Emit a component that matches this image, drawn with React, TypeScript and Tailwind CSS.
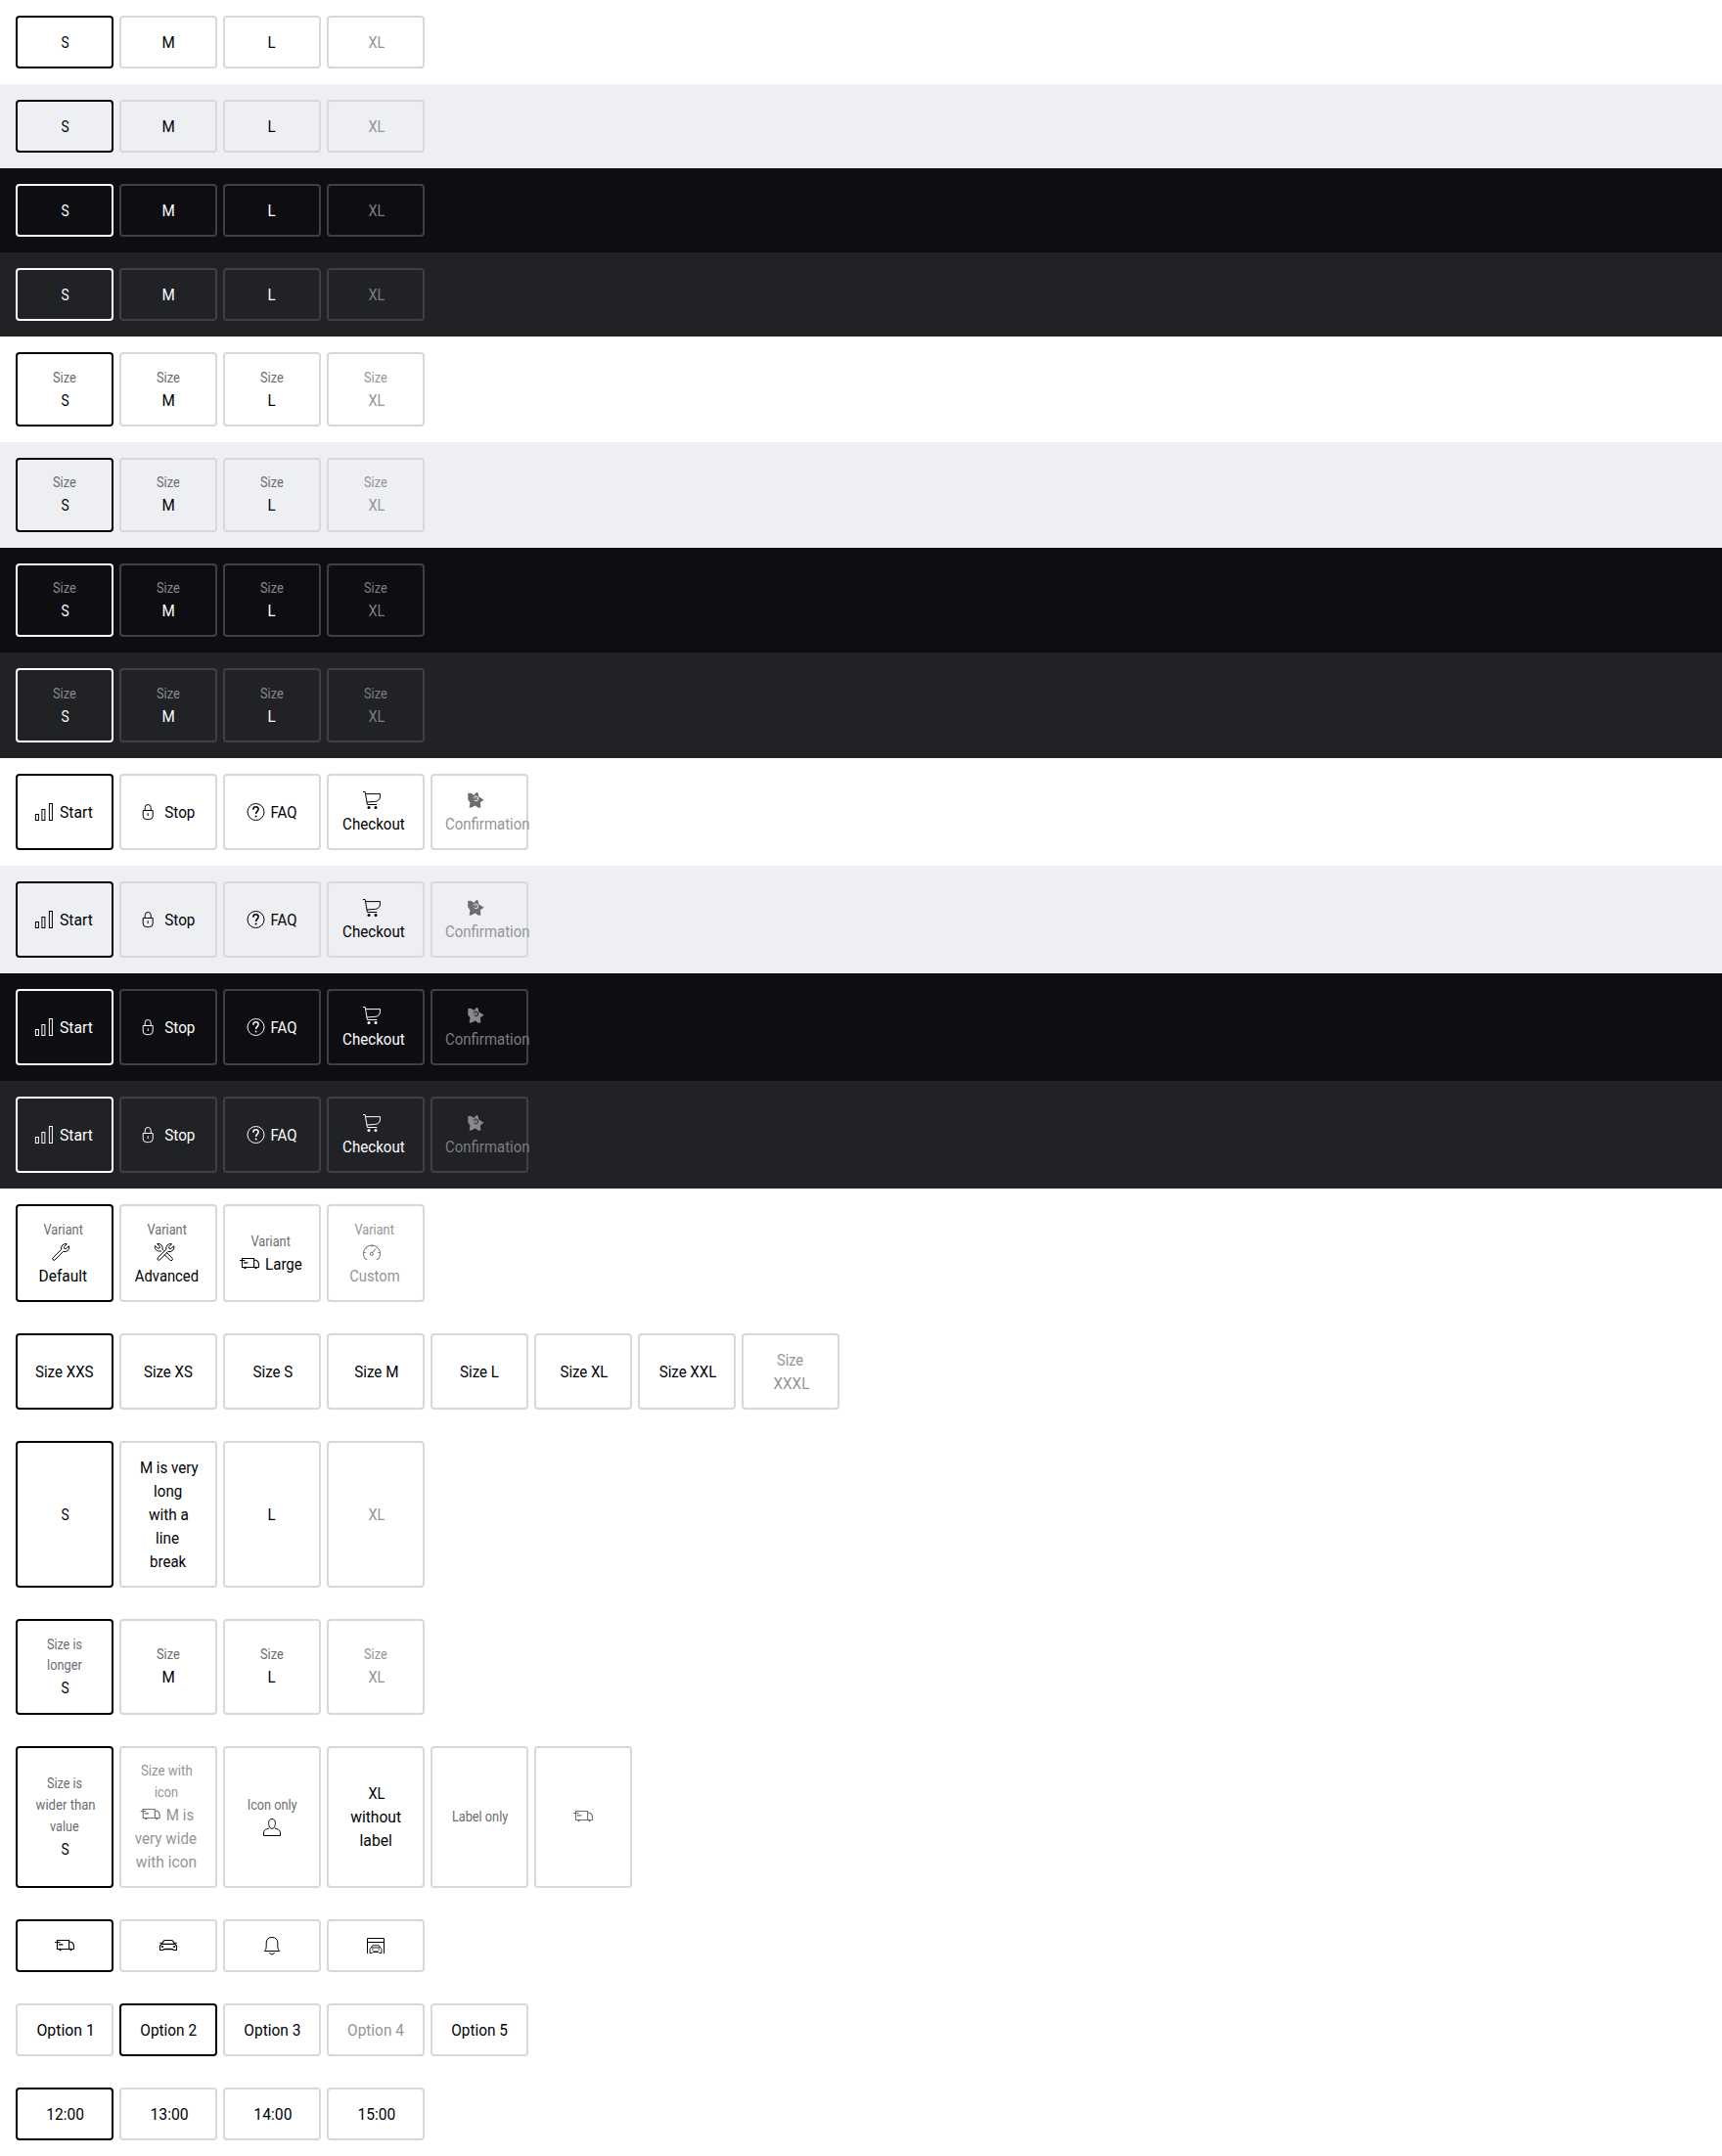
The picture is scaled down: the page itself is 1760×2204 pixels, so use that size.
import React from "react";

type IconName =
  | "chart" | "lock" | "question" | "cart" | "star" | "wrench" | "tools"
  | "gauge" | "van" | "car" | "bell" | "garage" | "user";

const WRENCH =
  "M18.4 3.7l-2.9 2.9.3 1.7 1.7.4 3-3a4.6 4.6 0 0 1-5.9 5.7L6.1 20a1.5 1.5 0 0 1-2.1-2.1l8.7-8.6a4.6 4.6 0 0 1 5.7-5.6z";

const icons: Record<IconName, React.ReactNode> = {
  chart: (
    <>
      <rect x="3.5" y="14.5" width="3" height="6" />
      <rect x="10" y="9.5" width="3" height="11" />
      <rect x="17.5" y="3.5" width="3" height="17" />
    </>
  ),
  lock: (
    <>
      <path d="M7 10.500h10v5.500a3.600 3.600 0 0 1-3.600 3.600h-2.800A3.600 3.600 0 0 1 7 16z" />
      <path d="M9 10.500V7.500a3 3 0 0 1 6 0v3M12 13.200v2.800" />
    </>
  ),
  question: (
    <>
      <circle cx="12" cy="12" r="8.5" />
      <path d="M9.400 9.700v-.4a2.600 2.500 0 0 1 5.200 0c0 2-2.500 2.200-2.500 4.600" strokeWidth="1.5" />
      <circle cx="12.1" cy="16.6" r="1" fill="currentColor" stroke="none" />
    </>
  ),
  cart: (
    <>
      <path d="M3 3.500h2.200l2.200 13h9.800M5.600 5.600h14.900v2.200c0 3.400-1.800 5.300-5.200 5.600l-8.400.6" />
      <circle cx="9" cy="19.5" r="1.5" fill="currentColor" stroke="none" />
      <circle cx="16" cy="19.5" r="1.5" fill="currentColor" stroke="none" />
    </>
  ),
  star: (
    <>
      <path
        d="M12.700 4.200c1.600-.7 2.300.6 2.500 4.100l5.400 3.400-3.700 2.500.5 5.300-2.600.3-2.900-2.200-4.800 2.200-1.500-.6.900-4.700-2.300-3.200.1-6.300 2.700-.2 3.400 2z"
        fill="currentColor"
        stroke="none"
      />
      <path d="M9.800 9.600l1.600-1.700 2.300.4 1.100 1.700-.6 2.200-2 .6-1.700-1.100M12 9.300l1 1.300" className="stroke-[var(--tile-bg)]" strokeWidth=".9" />
    </>
  ),
  wrench: <path d={WRENCH} />,
  tools: (
    <>
      <path d={WRENCH} transform="translate(1.2 0)" />
      <path d="M9 11.200L7.900 10.900A4.600 4.600 0 0 1 2.400 5.300l2.900 2.900 1.700-.3.4-1.700-2.800-2.700a4.600 4.600 0 0 1 5.400 5.700l1.400 1.400M14.200 12.400l5.900 5.900a1.500 1.500 0 0 1-2.100 2.100l-6-6" />
    </>
  ),
  gauge: (
    <>
      <path d="M7.200 19.200l-1.600.2A8.600 8.600 0 1 1 18.400 19.400l-1.600-.2M3.600 12.500h2M5.800 7.200l1.400 1.200M12 4.500v2M17.800 7.200l-1 .9M20.400 12.500h-2" />
      <circle cx="11.8" cy="13.8" r="1.6" />
      <path d="M12.900 12.500l3-3.900" />
    </>
  ),
  van: (
    <>
      <path d="M2 8.500h5.400M6 10.900h4.300M4.500 8.500v-2h12.100v9.300M4.500 8.500v7h14.800l2.200-.2v-2.600c0-2-1.300-3.900-2.900-4.400h-2" strokeWidth="1.1" />
      <circle cx="7.500" cy="16" r="1.2" fill="currentColor" stroke="none" />
      <circle cx="18.500" cy="16" r="1.2" fill="currentColor" stroke="none" />
    </>
  ),
  car: (
    <>
      <path d="M3.200 9.200h2.300M18.500 9.200h2.300M5.300 10.300l1.900-2.900c.4-.6 1-.9 1.700-.9h6.200c.7 0 1.300.3 1.700.9l1.900 2.900M5.300 10.400h13.400l1.800 1.600v4.500h-3l-1-1h-9l-1 1h-3V12z" strokeWidth="1.1" />
      <path d="M8.500 15h7l1 1h-9zM5 12.500h2v1H5zM17 12.500h2v1h-2z" fill="currentColor" strokeWidth=".5" />
    </>
  ),
  bell: (
    <path d="M4.300 17.500h15.400c-1.300-1.200-1.900-2.700-1.900-5V9c0-3.300-2.200-5.500-5.800-5.500S6.200 5.700 6.200 9v3.500c0 2.300-.6 3.800-1.900 5zM9.600 19c.2 1.200 1 1.800 2.400 1.800s2.200-.6 2.400-1.800" />
  ),
  garage: (
    <>
      <path d="M3.500 20V4.500h17V20M3.500 8.500h17" />
      <path d="M7.400 14l1.300-2.200h6.600l1.300 2.200 1.400 1.300v4.200h-2.300l-.9-1H9.200l-.9 1H6v-4.200zM7.400 14h9.200M8 16h1.500M14.500 16H16M9.500 18h5" strokeWidth=".9" />
    </>
  ),
  user: (
    <path d="M8.600 7.300c0-2.300 1.300-3.800 3.400-3.800s3.400 1.500 3.400 3.800c0 3.400-1.100 6-3.400 6s-3.400-2.600-3.400-6zM9.300 12.300c-.6.900-1.300 1.200-2.500 1.500-2.100.5-3.300 1.900-3.300 4.100v2.600h17v-2.600c0-2.200-1.200-3.600-3.300-4.100-1.200-.3-1.900-.6-2.500-1.500" />
  ),
};

function Icon({ name, className = "" }: { name: IconName; className?: string }) {
  return (
    <svg viewBox="0 0 24 24" fill="none" stroke="currentColor" strokeWidth="1" className={`size-6 shrink-0 ${className}`}>
      {icons[name]}
    </svg>
  );
}

const ctx = document.createElement("canvas").getContext("2d")!;

/* Sets a run of text so that its visible ink spans exactly `width` pixels. */
function Fit({ text, width, size }: { text: string; width: number; size: number }) {
  ctx.font = `400 ${size}px Roboto`;
  const m = ctx.measureText(text);
  const scale = width / (m.actualBoundingBoxRight + m.actualBoundingBoxLeft);
  return (
    <span className="inline-flex shrink-0 justify-start" style={{ width }}>
      <span
        className="inline-block shrink-0 origin-left whitespace-nowrap"
        style={{ transform: `translateX(${m.actualBoundingBoxLeft * scale}px) scaleX(${scale})` }}
      >
        {text}
      </span>
    </span>
  );
}

type Run = { t?: string; w?: number; dx?: number; icon?: IconName };
type Item = { label?: Run[]; value?: Run[]; selected?: boolean; disabled?: boolean; muted?: boolean };
type Theme = "white" | "surface" | "black" | "charcoal";

const themes: Record<Theme, { bg: string; text: string; label: string; off: string; line: string; active: string }> = {
  white: { bg: "bg-white [--tile-bg:#ffffff]", text: "text-[#010205]", label: "text-[#6b6d70]", off: "text-[#949598]", line: "border-[#d8d8db]", active: "border-[#010205]" },
  surface: { bg: "bg-[#eeeff2] [--tile-bg:#eeeff2]", text: "text-[#010205]", label: "text-[#6b6d70]", off: "text-[#949598]", line: "border-[#d8d8db]", active: "border-[#010205]" },
  black: { bg: "bg-[#0e0e12] [--tile-bg:#0e0e12]", text: "text-[#fbfcff]", label: "text-[#88898c]", off: "text-[#7c7d81]", line: "border-[#404044]", active: "border-[#fbfcff]" },
  charcoal: { bg: "bg-[#212225] [--tile-bg:#212225]", text: "text-[#fbfcff]", label: "text-[#88898c]", off: "text-[#7c7d81]", line: "border-[#404044]", active: "border-[#fbfcff]" },
};

function Tile({ item, theme }: { item: Item; theme: Theme }) {
  const c = themes[theme];
  const iconColor = item.disabled || item.muted ? c.label : c.text;
  return (
    <button
      type="button"
      disabled={item.disabled}
      className={`flex w-[100px] shrink-0 flex-col items-center justify-center rounded-[4px] border-2 py-[13px] ${item.selected ? c.active : c.line}`}
    >
      {item.label?.map((r, i) => (
        <span key={i} className={`flex h-[21.8px] items-center text-[14px] leading-[22.6px] ${item.disabled ? c.off : c.label}`} style={{ translate: `${r.dx ?? 0}px 0` }}>
          <Fit text={r.t!} width={r.w!} size={14} />
        </span>
      ))}
      {item.value?.map((r, i) => (
        <span key={i} className={`flex h-6 items-center gap-[4.3px] text-[16.5px] leading-6 ${item.disabled ? c.off : c.text}`} style={{ translate: `${r.dx ?? 0}px 0` }}>
          {r.icon && <Icon name={r.icon} className={iconColor} />}
          {r.t && (
            <span className="flex pt-[1.5px]">
              <Fit text={r.t} width={r.w!} size={16.5} />
            </span>
          )}
        </span>
      ))}
    </button>
  );
}

function Row({ items, theme = "white" }: { items: Item[]; theme?: Theme }) {
  return (
    <section className={`flex gap-1.5 p-4 ${themes[theme].bg}`}>
      {items.map((item, i) => (
        <Tile key={i} item={item} theme={theme} />
      ))}
    </section>
  );
}

const S: Run = { t: "S", w: 8.3, dx: 0.5 };
const M: Run = { t: "M", w: 12, dx: 0.5 };
const L: Run = { t: "L", w: 7.3, dx: 0.5 };
const XL: Run = { t: "XL", w: 17, dx: 0.5 };
const size: Run = { t: "Size", w: 23.3 };
const variant: Run = { t: "Variant", w: 40.7, dx: -1.5 };

const plain: Item[] = [
  { value: [S], selected: true },
  { value: [M] },
  { value: [L] },
  { value: [XL], disabled: true },
];
const labelled: Item[] = plain.map((p) => ({ ...p, label: [size] }));
const withIcons: Item[] = [
  { value: [{ icon: "chart", t: "Start", w: 33.5, dx: -2.1 }], selected: true },
  { value: [{ icon: "lock", t: "Stop", w: 31, dx: -2.8 }] },
  { value: [{ icon: "question", t: "FAQ", w: 25.7, dx: -1.5 }] },
  { value: [{ icon: "cart", dx: -4 }, { t: "Checkout", w: 63.2, dx: -1.9 }] },
  { value: [{ icon: "star", dx: -4 }, { t: "Confirmation", w: 85.5, dx: 8 }], disabled: true },
];
const variants: Item[] = [
  { label: [variant], value: [{ icon: "wrench", dx: -4 }, { t: "Default", w: 48.3, dx: -1.5 }], selected: true },
  { label: [variant], value: [{ icon: "tools", dx: -4 }, { t: "Advanced", w: 65, dx: -2.2 }] },
  { label: [variant], value: [{ icon: "van", t: "Large", w: 37, dx: -2 }] },
  { label: [variant], value: [{ icon: "gauge", dx: -4 }, { t: "Custom", w: 51, dx: -1.8 }], disabled: true },
];
const sizes: Item[] = [
  { value: [{ t: "Size XXS", w: 59.7 }], selected: true },
  { value: [{ t: "Size XS", w: 50 }] },
  { value: [{ t: "Size S", w: 41, dx: 0.5 }] },
  { value: [{ t: "Size M", w: 44.7, dx: 0.3 }] },
  { value: [{ t: "Size L", w: 40 }] },
  { value: [{ t: "Size XL", w: 49, dx: 0.5 }] },
  { value: [{ t: "Size XXL", w: 58.7, dx: 0.7 }] },
  { value: [{ t: "Size", w: 27.3 }, { t: "XXXL", w: 37, dx: 0.5 }], disabled: true },
];
const longValue: Item[] = [
  { value: [S], selected: true },
  {
    value: [
      { t: "M is very", w: 59, dx: 0.8 },
      { t: "long", w: 28 },
      { t: "with a", w: 41 },
      { t: "line", w: 23.3 },
      { t: "break", w: 36.7 },
    ],
  },
  { value: [L] },
  { value: [XL], disabled: true },
];
const longLabel: Item[] = [
  { label: [{ t: "Size is", w: 35.7 }, { t: "longer", w: 35 }], value: [S], selected: true },
  { label: [size], value: [M] },
  { label: [size], value: [L] },
  { label: [size], value: [XL], disabled: true },
];
const mixed: Item[] = [
  { label: [{ t: "Size is", w: 35.9 }, { t: "wider than", w: 60.2, dx: 0.6 }, { t: "value", w: 29.3 }], value: [S], selected: true },
  {
    label: [{ t: "Size with", w: 52, dx: -2 }, { t: "icon", w: 23.4, dx: -2 }],
    value: [{ icon: "van", t: "M is", w: 27, dx: -2.3 }, { t: "very wide", w: 63.4, dx: -2.2 }, { t: "with icon", w: 61.3, dx: -2.2 }],
    disabled: true,
  },
  { label: [{ t: "Icon only", w: 50.3, dx: 0.6 }], value: [{ icon: "user" }] },
  { value: [{ ...XL, dx: 0.4 }, { t: "without", w: 51.4, dx: 0.2 }, { t: "label", w: 31.4, dx: 0.5 }] },
  { label: [{ t: "Label only", w: 56.8, dx: 0.8 }] },
  { value: [{ icon: "van" }], muted: true },
];
const iconOnly: Item[] = [
  { value: [{ icon: "van" }], selected: true },
  { value: [{ icon: "car" }] },
  { value: [{ icon: "bell" }] },
  { value: [{ icon: "garage" }] },
];
const options: Item[] = [
  { value: [{ t: "Option 1", w: 56.4, dx: -0.6 }] },
  { value: [{ t: "Option 2", w: 57.5, dx: 0.3 }], selected: true },
  { value: [{ t: "Option 3", w: 57.8, dx: 0.3 }] },
  { value: [{ t: "Option 4", w: 57.5, dx: 0.1 }], disabled: true },
  { value: [{ t: "Option 5", w: 57.5, dx: 0.2 }] },
];
const times: Item[] = [
  { value: [{ t: "12:00", w: 37.5, dx: 1.3 }], selected: true },
  { value: [{ t: "13:00", w: 38, dx: 1.4 }] },
  { value: [{ t: "14:00", w: 37.9, dx: 1.3 }] },
  { value: [{ t: "15:00", w: 37.6, dx: 1.4 }] },
];

const order: Theme[] = ["white", "surface", "black", "charcoal"];

export default function App() {
  return (
    <main className="min-h-[2204px] w-full overflow-hidden font-['Roboto',sans-serif] antialiased">
      {[plain, labelled, withIcons].map((items, g) =>
        order.map((theme) => <Row key={`${g}-${theme}`} items={items} theme={theme} />)
      )}
      {[variants, sizes, longValue, longLabel, mixed, iconOnly, options, times].map((items, i) => (
        <Row key={i} items={items} />
      ))}
    </main>
  );
}
